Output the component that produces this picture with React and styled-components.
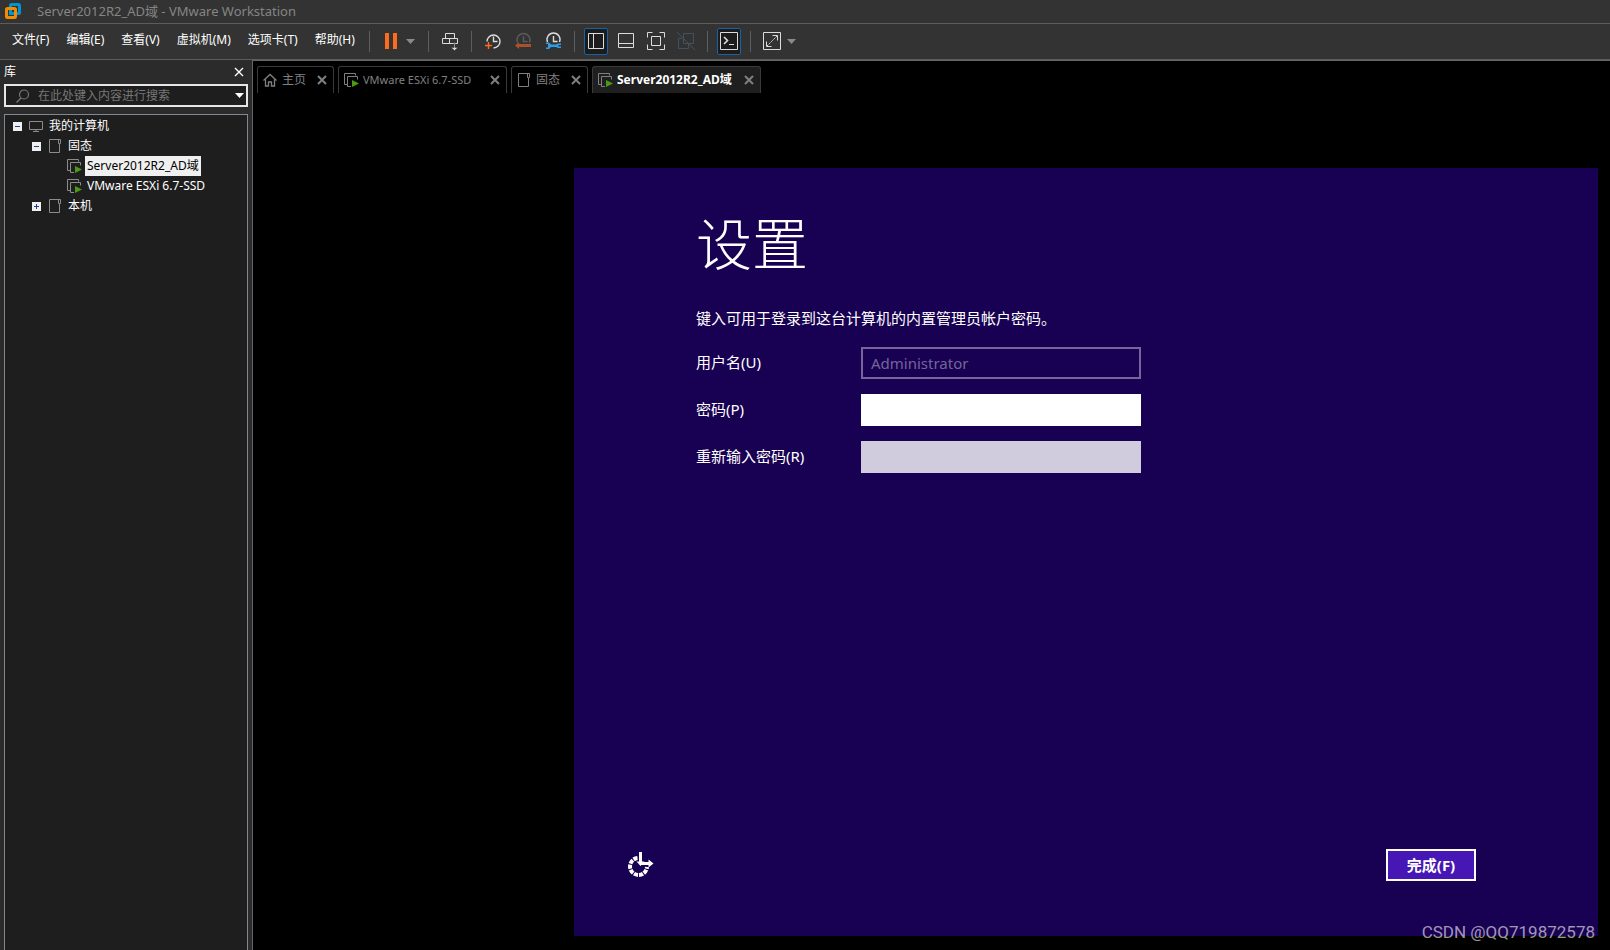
import React from 'react'
import styled, { createGlobalStyle } from 'styled-components'

const menus = ['文件(F)', '编辑(E)', '查看(V)', '虚拟机(M)', '选项卡(T)', '帮助(H)']

const tabs = [
  { name: '主页', icon: 'home' },
  { name: 'VMware ESXi 6.7-SSD', icon: 'vm', wide: true, small: true },
  { name: '固态', icon: 'folder' },
  { name: 'Server2012R2_AD域', icon: 'vm', wide: true, active: true },
]

const tree = [
  { name: '我的计算机', icon: 'monitor', level: 0, toggle: 'minus' },
  { name: '固态', icon: 'folder', level: 1, toggle: 'minus' },
  { name: 'Server2012R2_AD域', icon: 'vm', level: 2, selected: true },
  { name: 'VMware ESXi 6.7-SSD', icon: 'vm', level: 2 },
  { name: '本机', icon: 'folder', level: 1, toggle: 'plus' },
]

function Logo() {
  return (
    <svg width="18" height="18" viewBox="0 0 18 18" fill="none" strokeWidth="3">
      <rect x="6.5" y="2.5" width="9" height="9" rx="1" stroke="#0095d3" />
      <rect x="2.5" y="6.5" width="9" height="9" rx="1" stroke="#f38b00" />
      <path d="M6.5 8v3.5H10" stroke="#0095d3" />
    </svg>
  )
}

function ItemIcon({ type }) {
  if (type === 'home') {
    return (
      <svg width="16" height="16" viewBox="0 0 16 16" fill="none" stroke="currentColor" strokeWidth="1.3">
        <path d="M1.5 8.5 8 2.5l6.5 6M3.5 7.5v6.5h3v-4h3v4h3V7.5" />
      </svg>
    )
  }
  if (type === 'folder') {
    return (
      <svg width="16" height="16" viewBox="0 0 16 16" fill="none" stroke="currentColor">
        <path d="M2.500 1.500h11v4h-1v9h-10zM11.500 1.500v4h1" />
      </svg>
    )
  }
  if (type === 'monitor') {
    return (
      <svg width="16" height="16" viewBox="0 0 16 16" fill="none" stroke="currentColor">
        <path d="M1.5 3.5h13v8h-13zM8 11.5v2M5 13.5h6" />
      </svg>
    )
  }
  return (
    <svg width="16" height="16" viewBox="0 0 16 16" fill="none" stroke="currentColor">
      <path d="M4 12.500H1.500v-11h11v2M8 14.500H4.500v-10h10v3" />
      <path d="M9 8v7l7-3.500z" fill="#4a9a14" stroke="none" />
    </svg>
  )
}

function CloseIcon({ bold }) {
  return (
    <svg width="10" height="10" viewBox="0 0 10 10" stroke="currentColor" strokeWidth={bold ? 2 : 1.4}>
      <path d="M1 1l8 8M9 1l-8 8" />
    </svg>
  )
}

function Caret() {
  return (
    <svg width="9" height="5" viewBox="0 0 9 5" fill="currentColor">
      <path d="M0 0h9L4.500 5z" />
    </svg>
  )
}

const shapes = {
  pause: <path d="M6 5h4v16H6zM14 5h4v16h-4z" fill="#ff6a1f" stroke="none" />,
  send: (
    <>
      <path d="M7.500 5.500h9v5h-9zM4.500 10.500h15v5h-15zM11.500 10.500v5" />
      <path d="M16 14.500h1v5h3l-3.500 3-3.500-3h3z" fill="#dcdcdc" stroke="#333" strokeWidth="0.500" />
    </>
  ),
  snapshot: (
    <>
      <path d="M6 13.500a6.500 6.500 0 1 1 6.500 6.500M12.500 8.500v5h4" strokeWidth="1.400" />
      <path d="M7.500 14v7M4 17.500h7" stroke="#ff6a1f" strokeWidth="1.400" />
    </>
  ),
  revert: (
    <>
      <path d="M6.500 14.500a6.500 6.500 0 1 1 12 0M12.500 8v5.500h4" stroke="#5a5a5a" strokeWidth="1.400" />
      <path d="M4 17.500l4-3.500v2h12v3H8v2z" fill="#a7522a" stroke="none" />
    </>
  ),
  manage: (
    <>
      <path d="M6.500 14a6.500 6.500 0 1 1 12 0M12.500 8v5.500h4" strokeWidth="1.400" />
      <path d="M5 14.500h3l2 2h5l2-1h3v1.500h-2.500v1.500H20V20h-3l-2-1h-5l-2 2H5v-1.500h2v-3.500H5z" fill="#2f9fe5" stroke="none" />
    </>
  ),
  sidebar: <path d="M4.500 5.500h15v15h-15zM9.500 5.500v15" />,
  thumbs: <path d="M4.500 5.500h15v14h-15zM4.500 15.500h15" />,
  stretch: <path d="M3.500 9.500v-5h5M15.500 4.500h5v5M20.500 16.500v5h-5M8.500 21.500h-5v-5M7.500 8.500h9v9h-9z" />,
  unity: <path d="M9.500 5.500h10v10h-10zM8 10.500H4.500v10h10V16M3 4l18 18" stroke="#42525d" />,
  console: (
    <>
      <path d="M3.500 4.500h17v17h-17zM12 16.500h5" />
      <path d="M7 9l3.500 3.500L7 16" strokeWidth="1.600" />
    </>
  ),
  full: (
    <>
      <path d="M3.500 4.500h17v17h-17zM12.500 7.500h5v5M6.500 13.500v5h5" />
      <path d="M7 18L17 8" strokeDasharray="2 1" />
    </>
  ),
}

function Tool({ shape, label, active }) {
  return (
    <ToolButton type="button" aria-label={label} $active={active}>
      <svg width="24" height="27" viewBox="0 0 24 27" fill="none" stroke="#dcdcdc">{shapes[shape]}</svg>
    </ToolButton>
  )
}

function EaseIcon() {
  return (
    <svg width="26" height="26" viewBox="0 1 26 26" fill="none" stroke="#fff">
      <path d="M9.500 7A8.500 8.500 0 1 0 19 16" strokeWidth="4" strokeDasharray="4.200 1" />
      <path d="M12.500 1v11M13 12.500h8" strokeWidth="3" />
      <path d="M8.500 10.500h8l-4 4.500zM20.500 8.500v8l5-4z" fill="#fff" stroke="none" />
    </svg>
  )
}

function App() {
  return (
    <Wrapper>
      <GlobalStyle />
      <TitleBar>
        <Logo />
        <span>Server2012R2_AD域 - VMware Workstation</span>
      </TitleBar>

      <ToolBar>
        <Menu>
          {menus.map((m) => <MenuButton type="button" key={m}>{m}</MenuButton>)}
        </Menu>
        <Separator />
        <Tool shape="pause" label="挂起" />
        <CaretButton type="button" aria-label="电源"><Caret /></CaretButton>
        <Separator />
        <Tool shape="send" label="发送" />
        <Separator />
        <ToolGroup>
          <Tool shape="snapshot" label="拍摄快照" />
          <Tool shape="revert" label="恢复快照" />
          <Tool shape="manage" label="管理快照" />
        </ToolGroup>
        <Separator />
        <ToolGroup>
          <Tool shape="sidebar" label="显示库" active />
          <Tool shape="thumbs" label="缩略图" />
          <Tool shape="stretch" label="全屏" />
          <Tool shape="unity" label="Unity" />
        </ToolGroup>
        <Separator />
        <Tool shape="console" label="控制台" active />
        <Separator />
        <Tool shape="full" label="拉伸" />
        <CaretButton type="button" aria-label="拉伸选项"><Caret /></CaretButton>
      </ToolBar>

      <Main>
        <Sidebar>
          <SideHead>
            <SideTitle>库</SideTitle>
            <IconButton type="button" aria-label="关闭库"><CloseIcon /></IconButton>
          </SideHead>
          <Search>
            <svg width="15" height="14" viewBox="0 0 15 14" fill="none" stroke="#777" strokeWidth="1.200">
              <circle cx="9" cy="5.500" r="4.500" />
              <path d="M6 9l-4.500 4.500" />
            </svg>
            <SearchInput type="text" aria-label="搜索" placeholder="在此处键入内容进行搜索" />
            <IconButton type="button" aria-label="搜索选项"><Caret /></IconButton>
          </Search>
          <Tree>
            {tree.map((item) => (
              <TreeRow key={item.name} $level={item.level}>
                {item.toggle && (
                  <Toggle type="button" aria-label={item.name}>
                    <svg width="9" height="9" viewBox="0 0 9 9" stroke="#24408e">
                      <path d={item.toggle === 'plus' ? 'M2 4.500h5M4.500 2v5' : 'M2 4.500h5'} />
                    </svg>
                  </Toggle>
                )}
                <ItemIcon type={item.icon} />
                <TreeName $selected={item.selected}>{item.name}</TreeName>
              </TreeRow>
            ))}
          </Tree>
        </Sidebar>

        <Work>
          <Tabs>
            {tabs.map((tab) => (
              <Tab key={tab.name} $wide={tab.wide} $active={tab.active}>
                <TabButton type="button" $active={tab.active} $small={tab.small}>
                  <ItemIcon type={tab.icon} />
                  {tab.name}
                </TabButton>
                <IconButton type="button" aria-label={'关闭 ' + tab.name}><CloseIcon bold /></IconButton>
              </Tab>
            ))}
          </Tabs>
          <Desk>
            <Screen>
              <Title>设置</Title>
              <Hint>键入可用于登录到这台计算机的内置管理员帐户密码。</Hint>
              <Fields>
                <Label htmlFor="user">用户名(U)</Label>
                <Field id="user" type="text" defaultValue="Administrator" disabled $kind="off" />
                <Label htmlFor="pass">密码(P)</Label>
                <Field id="pass" type="password" />
                <Label htmlFor="again">重新输入密码(R)</Label>
                <Field id="again" type="password" $kind="dim" />
              </Fields>
              <ScreenFoot>
                <EaseButton type="button" aria-label="轻松使用"><EaseIcon /></EaseButton>
                <Finish type="button">完成(F)</Finish>
              </ScreenFoot>
            </Screen>
            <Mark>CSDN @QQ719872578</Mark>
          </Desk>
        </Work>
      </Main>
    </Wrapper>
  )
}

export default App

const GlobalStyle = createGlobalStyle`
  * {
    box-sizing: border-box;
  }
  body {
    margin: 0;
    background: #000;
  }
  button, input {
    font: inherit;
    color: inherit;
    border: 0;
    padding: 0;
    background: none;
  }
  svg {
    display: block;
    flex: none;
  }
`

const Wrapper = styled.div`
  display: flex;
  flex-direction: column;
  min-height: 100vh;
  font-family: 'Noto Sans', 'Noto Sans CJK SC', sans-serif;
  font-size: 12px;
  line-height: 20px;
  color: #fff;
  white-space: nowrap;
`

const TitleBar = styled.header`
  display: flex;
  align-items: center;
  gap: 15px;
  height: 24px;
  padding: 0 0 2px 4px;
  background: #333;
  border-bottom: 1px solid #5c5c5c;
  color: #858585;
  font-size: 13px;
`

const ToolBar = styled.div`
  display: flex;
  align-items: center;
  height: 36px;
  padding-left: 12px;
  background: #333;
  border-bottom: 1px solid #5c5c5c;
`

const Menu = styled.nav`
  display: flex;
  gap: 17px;
  padding-right: 5px;
`

const MenuButton = styled.button`
  padding-bottom: 3px;
  line-height: 20px;
`

const Separator = styled.span`
  width: 1px;
  height: 21px;
  margin: 0 9px;
  background: #5e5e5e;
`

const ToolGroup = styled.div`
  display: flex;
  gap: 6px;
`

const ToolButton = styled.button`
  width: 24px;
  height: 27px;
  border-radius: 2px;
  background: ${(p) => (p.$active ? '#1c1c1c' : 'none')};
  box-shadow: ${(p) => (p.$active ? 'inset 0 0 0 1px #1a62a3' : 'none')};
`

const CaretButton = styled.button`
  display: flex;
  align-items: center;
  justify-content: center;
  width: 16px;
  height: 27px;
  color: #8a8a8a;
`

const Main = styled.div`
  display: flex;
  flex: 1;
`

const Sidebar = styled.aside`
  display: flex;
  flex-direction: column;
  width: 252px;
  padding: 1px 4px 0;
  background: #2b2b2b;
`

const SideHead = styled.div`
  display: flex;
  align-items: center;
  justify-content: space-between;
  height: 22px;
  margin-bottom: 1px;
  padding-right: 4px;
`

const SideTitle = styled.h2`
  margin: 0;
  font-size: 12px;
  font-weight: 400;
`

const IconButton = styled.button`
  display: flex;
  align-items: center;
`

const Search = styled.div`
  display: flex;
  align-items: center;
  gap: 8px;
  height: 23px;
  padding: 0 2px 0 9px;
  border: 2px solid #e6e6e6;
  background: #1e1e1e;
`

const SearchInput = styled.input`
  flex: 1;
  min-width: 0;
  &::placeholder {
    color: #777;
    opacity: 1;
  }
`

const Tree = styled.ul`
  flex: 1;
  margin: 7px 0 0;
  padding: 1px 0 0 8px;
  list-style: none;
  background: #1e1e1e;
  border: 1px solid #828790;
  border-bottom: 0;
`

const TreeRow = styled.li`
  display: flex;
  align-items: center;
  height: 20px;
  padding-left: ${(p) => (p.$level === 2 ? 53 : p.$level * 19)}px;
  color: #8c8c8c;
`

const Toggle = styled.button`
  width: 9px;
  height: 9px;
  margin-right: 6px;
  background: #f0f0f0;
`

const TreeName = styled.span`
  margin-left: 3px;
  padding: 0 2px;
  background: ${(p) => (p.$selected ? '#f0f0f0' : 'none')};
  color: ${(p) => (p.$selected ? '#000' : '#fff')};
`

const Work = styled.main`
  display: flex;
  flex: 1;
  flex-direction: column;
  border: 1px solid #666;
  border-width: 1px 0 0 1px;
`

const Tabs = styled.div`
  display: flex;
  gap: 4px;
  padding: 5px 4px 0;
`

const Tab = styled.div`
  display: flex;
  align-items: center;
  justify-content: space-between;
  width: ${(p) => (p.$wide ? 169 : 77)}px;
  height: 27px;
  padding: 0 6px 0 4px;
  border: 1px solid #3a3a3a;
  border-bottom: 0;
  border-radius: 3px 3px 0 0;
  background: ${(p) => (p.$active ? '#1f1f1f' : '#000')};
  color: #808080;
`

const TabButton = styled.button`
  display: flex;
  align-items: center;
  gap: 4px;
  font-size: ${(p) => (p.$small ? 11 : 12)}px;
  font-weight: ${(p) => (p.$active ? 700 : 400)};
  color: ${(p) => (p.$active ? '#fff' : '#808080')};
  svg {
    color: #808080;
  }
`

const Desk = styled.div`
  position: relative;
  display: flex;
  flex: 1;
  padding: 75px 12px 14px 321px;
`

const Screen = styled.section`
  display: flex;
  flex: 1;
  flex-direction: column;
  padding: 35px 122px 55px;
  background: #180052;
  font-size: 15px;
`

const Title = styled.h1`
  margin: 0;
  font-size: 56px;
  line-height: 80px;
  font-weight: 300;
`

const Hint = styled.p`
  margin: 25px 0 19px;
`

const Fields = styled.div`
  display: grid;
  grid-template-columns: 165px 280px;
  row-gap: 15px;
  align-items: start;
`

const Label = styled.label`
  line-height: 30px;
`

const Field = styled.input`
  width: 100%;
  height: 32px;
  padding: 0 8px;
  border: 2px solid ${(p) => (p.$kind === 'off' ? '#74669a' : 'transparent')};
  background: ${(p) => (p.$kind === 'off' ? '#180052' : p.$kind === 'dim' ? '#d1ccdd' : '#fff')};
  color: ${(p) => (p.$kind === 'off' ? '#74669a' : '#000')};
`

const ScreenFoot = styled.footer`
  display: flex;
  align-items: center;
  justify-content: space-between;
  margin: auto 0 0 -68px;
`

const EaseButton = styled.button`
  width: 26px;
  height: 26px;
`

const Finish = styled.button`
  width: 90px;
  height: 32px;
  border: 2px solid #fff;
  background: #4617b4;
  font-weight: 700;
`

const Mark = styled.span`
  position: absolute;
  right: 15px;
  bottom: 8px;
  font-family: Roboto, sans-serif;
  font-size: 17px;
  color: rgba(255, 255, 255, 0.6);
`
